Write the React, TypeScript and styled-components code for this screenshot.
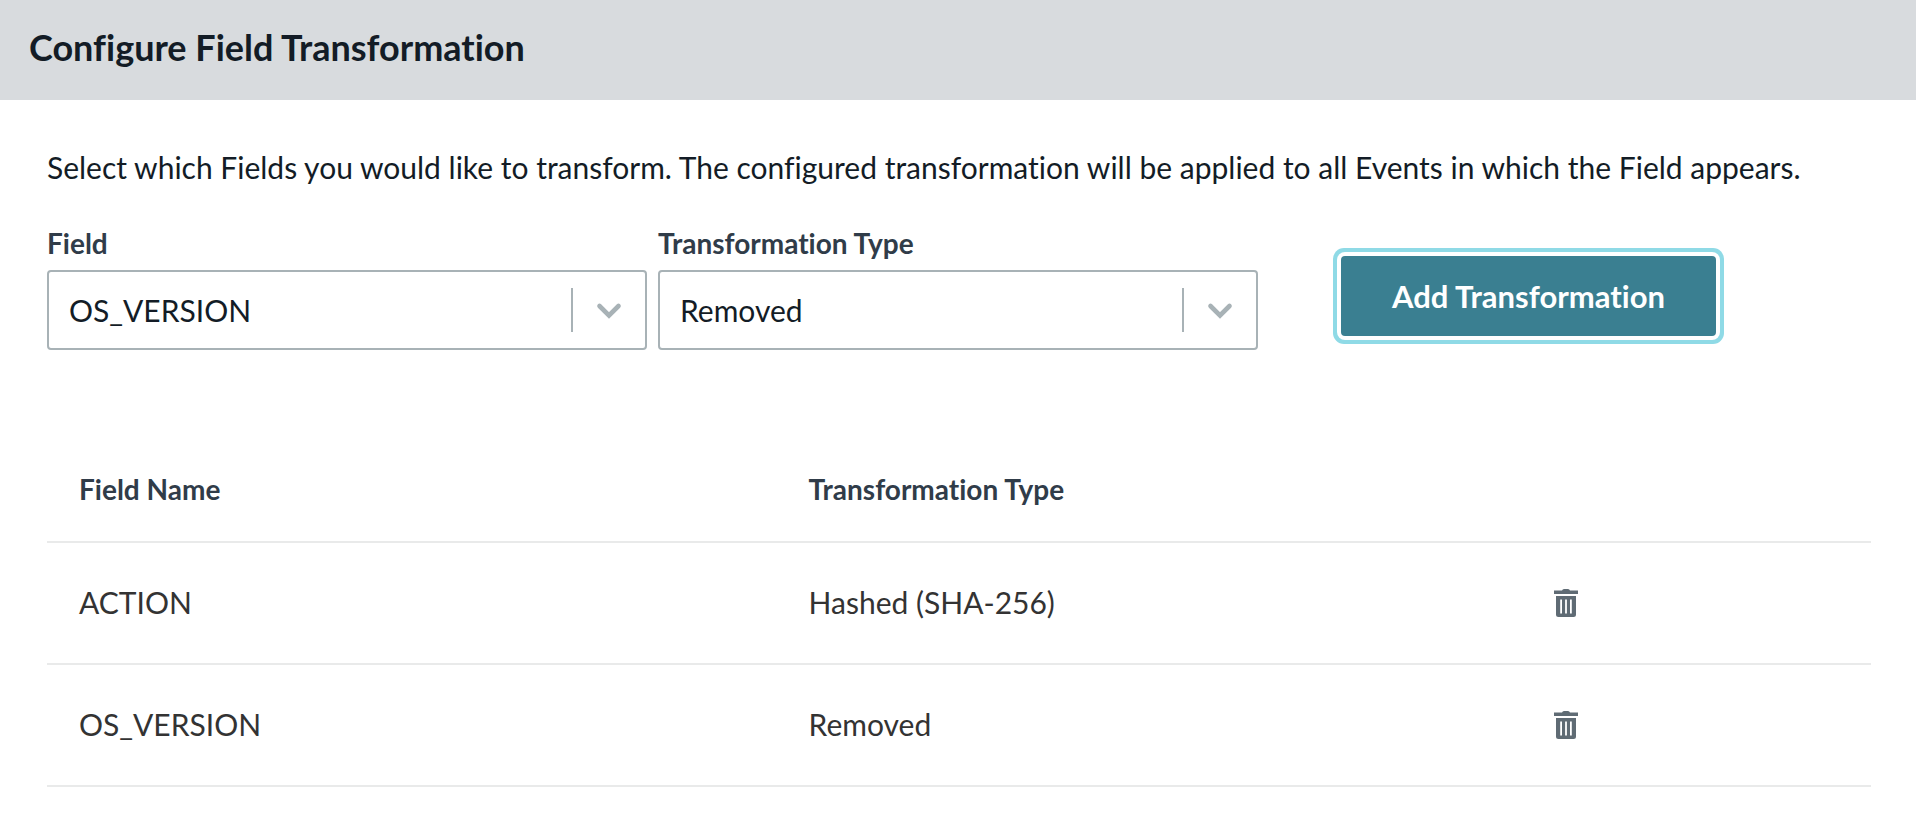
import React, { useId, useState } from "react";
import styled, { createGlobalStyle } from "styled-components";

const GlobalStyle = createGlobalStyle`
  *, *::before, *::after { box-sizing: border-box; }
  body {
    margin: 0;
    background: #ffffff;
    color: #131c26;
    font-family: Lato, "Liberation Sans", sans-serif;
    font-size: 30px;
    line-height: 40px;
    font-variant-ligatures: none;
  }
`;

const Header = styled.header`
  display: flex;
  align-items: center;
  height: 100px;
  padding: 0 29px 6px;
  background: #d8dbde;
`;

const Title = styled.h1`
  margin: 0;
  font-size: 36px;
  line-height: 40px;
  font-weight: 700;
`;

const Content = styled.main`
  padding: 47px 45px 47px 47px;
`;

const Intro = styled.p`
  margin: 0;
`;

const Form = styled.form`
  display: flex;
  flex-wrap: wrap;
  align-items: flex-end;
  gap: 11px;
  margin-top: 40px;
`;

const Field = styled.div`
  flex: 0 1 600px;
  min-width: 0;
`;

const Label = styled.label`
  display: block;
  margin-bottom: 11px;
  color: #303c49;
  font-size: 28px;
  line-height: 32px;
  font-weight: 700;
`;

const SelectFrame = styled.div`
  display: grid;
  align-items: center;
  grid-template-columns: 1fr 74px;
`;

const NativeSelect = styled.select`
  grid-area: 1 / 1 / 2 / 3;
  appearance: none;
  width: 100%;
  height: 80px;
  padding: 0 96px 0 20px;
  border: 2px solid #a8b2b6;
  border-radius: 4px;
  background: #ffffff;
  color: #131c26;
  font: inherit;
`;

const Indicator = styled.span`
  grid-area: 1 / 2 / 2 / 3;
  display: flex;
  align-items: center;
  justify-content: center;
  height: 44px;
  margin-right: 2px;
  margin-left: -2px;
  padding-top: 2px;
  border-left: 2px solid #a8b2b6;
  color: #a8b2b6;
  pointer-events: none;
`;

const AddButton = styled.button`
  height: 80px;
  min-width: 375px;
  margin: 0 0 14px 72px;
  padding: 0 48px;
  border: 0;
  border-radius: 4px;
  background: #3a7f91;
  box-shadow: 0 0 0 4px #ffffff, 0 0 0 8px #8fdae6;
  color: #ffffff;
  font: inherit;
  font-size: 31px;
  font-weight: 700;
`;

const Table = styled.table`
  width: 100%;
  margin-top: 86px;
  border-collapse: collapse;
  table-layout: fixed;
  text-align: left;
`;

const Column = styled.col<{ $width: string }>`
  width: ${({ $width }) => $width};
`;

const HeadCell = styled.th`
  height: 106px;
  padding: 0 32px;
  border-bottom: 2px solid #e9eaea;
  color: #303c49;
  font-size: 28px;
  font-weight: 700;
`;

const Cell = styled.td`
  height: 122px;
  padding: 0 32px 2px;
  border-bottom: 2px solid #e9eaea;
  color: #333333;
`;

const IconButton = styled.button`
  display: flex;
  padding: 14px 16px 12px;
  border: 0;
  background: none;
  color: #5f6b74;
`;

function Chevron() {
  return (
    <svg width="26" height="18" viewBox="0 0 26 18" fill="none" aria-hidden="true">
      <path d="M3.5 4 L13 13.5 L22.5 4" stroke="currentColor" strokeWidth="4.6" strokeLinecap="round" />
    </svg>
  );
}

function TrashIcon() {
  return (
    <svg width="24" height="28" viewBox="0 0 24 28" fill="currentColor" aria-hidden="true">
      <path d="M8 1.5 Q8.5 0 10 0 H14 Q15.500 0 16 1.500 H24 V5 H0 V1.500 Z" />
      <path
        fillRule="evenodd"
        d="M2 7 H22 V25.500 Q22 28 19.500 28 H4.500 Q2 28 2 25.500 Z M6.200 10.500 V24.500 H8 V10.500 Z M11.100 10.500 V24.500 H12.900 V10.500 Z M16 10.500 V24.500 H17.800 V10.500 Z"
      />
    </svg>
  );
}

interface SelectFieldProps {
  label: string;
  value: string;
  options: string[];
  onChange: (value: string) => void;
}

function SelectField({ label, value, options, onChange }: SelectFieldProps) {
  const id = useId();
  return (
    <Field>
      <Label htmlFor={id}>{label}</Label>
      <SelectFrame>
        <NativeSelect id={id} value={value} onChange={(e) => onChange(e.target.value)}>
          {options.map((option) => (
            <option key={option}>{option}</option>
          ))}
        </NativeSelect>
        <Indicator>
          <Chevron />
        </Indicator>
      </SelectFrame>
    </Field>
  );
}

interface Transformation {
  field: string;
  type: string;
}

export default function App() {
  const [field, setField] = useState("OS_VERSION");
  const [type, setType] = useState("Removed");
  const [rows, setRows] = useState<Transformation[]>([
    { field: "ACTION", type: "Hashed (SHA-256)" },
    { field: "OS_VERSION", type: "Removed" },
  ]);

  const add = (e: React.FormEvent) => {
    e.preventDefault();
    setRows((current) => [...current.filter((r) => r.field !== field), { field, type }]);
  };

  return (
    <>
      <GlobalStyle />
      <Header>
        <Title>Configure Field Transformation</Title>
      </Header>
      <Content>
        <Intro>
          Select which Fields you would like to transform. The configured transformation will be applied to all
          Events in which the Field appears.
        </Intro>
        <Form onSubmit={add}>
          <SelectField label="Field" value={field} options={["ACTION", "OS_VERSION"]} onChange={setField} />
          <SelectField
            label="Transformation Type"
            value={type}
            options={["Hashed (SHA-256)", "Removed"]}
            onChange={setType}
          />
          <AddButton type="submit">Add Transformation</AddButton>
        </Form>
        <Table>
          <colgroup>
            <Column $width="40%" />
            <Column $width="40%" />
            <Column $width="20%" />
          </colgroup>
          <thead>
            <tr>
              <HeadCell scope="col">Field Name</HeadCell>
              <HeadCell scope="col">Transformation Type</HeadCell>
              <HeadCell as="td" />
            </tr>
          </thead>
          <tbody>
            {rows.map((row) => (
              <tr key={row.field}>
                <Cell>{row.field}</Cell>
                <Cell>{row.type}</Cell>
                <Cell>
                  <IconButton
                    type="button"
                    aria-label={`Delete ${row.field}`}
                    onClick={() => setRows((current) => current.filter((r) => r !== row))}
                  >
                    <TrashIcon />
                  </IconButton>
                </Cell>
              </tr>
            ))}
          </tbody>
        </Table>
      </Content>
    </>
  );
}
